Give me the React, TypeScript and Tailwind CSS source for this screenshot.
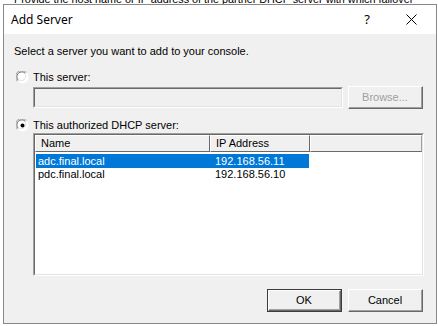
import React from "react";

const Radio = ({ checked }: { checked?: boolean }) => (
  <svg width="13" height="13" viewBox="0 0 13 13" className="shrink-0">
    <circle cx="6.5" cy="6.5" r="6" fill="#ffffff" />
    <path d="M1.3 10.3 A6 6 0 0 1 10.3 1.3" fill="none" stroke="#a0a0a0" strokeWidth="1" />
    <path d="M2.3 9.3 A4.8 4.8 0 0 1 9.3 2.3" fill="none" stroke="#696969" strokeWidth="1" />
    <path d="M10.7 2.7 A6 6 0 0 1 2.7 10.7" fill="none" stroke="#ffffff" strokeWidth="1" />
    <path d="M9.6 3.6 A4.8 4.8 0 0 1 3.6 9.6" fill="none" stroke="#e3e3e3" strokeWidth="1" />
    {checked && <circle cx="6.5" cy="6.5" r="2" fill="#000000" />}
  </svg>
);

const Btn = ({ label, w, def, disabled }: { label: string; w: string; def?: boolean; disabled?: boolean }) => (
  <div className={`${w} h-[23px] ${def ? "border border-[#3c3c3c]" : ""} bg-[#f0f0f0]`}>
    <div className="w-full h-full border-t border-l border-white border-b border-r border-b-[#696969] border-r-[#696969]">
      <div className="w-full h-full border-b border-r border-[#a0a0a0] border-t-0 border-l-0 flex items-center justify-center">
        <span className={`text-[11px] leading-none ${disabled ? "text-[#a0a0a0]" : "text-black"}`}>{label}</span>
      </div>
    </div>
  </div>
);

export default function App() {
  return (
    <div className="w-[438px] h-[326px] bg-white overflow-hidden" style={{ fontFamily: '"Liberation Sans", Arial, sans-serif' }}>
      <div className="h-[4px] overflow-hidden pl-[14px]">
        <div className="-mt-[7px] text-[10.8px] leading-[13px] text-black whitespace-nowrap">
          Provide the host name or IP address of the partner DHCP server with which failover
        </div>
      </div>
      <div className="ml-[3px] w-[434px] h-[320px] border border-[#888888] flex flex-col">
        <div className="h-[29px] bg-white flex items-center shrink-0">
          <span className="pl-[7px] text-[12px] text-black pt-[1px]" style={{ fontFamily: '"Noto Sans", sans-serif' }}>Add Server</span>
          <span className="ml-auto text-[13px] text-black mr-[36px]" style={{ fontFamily: '"Noto Sans", sans-serif' }}>?</span>
          <svg width="11" height="11" viewBox="0 0 11 11" className="mr-[19px]">
            <path d="M0.5 0.5 L10.5 10.5 M10.5 0.5 L0.5 10.5" stroke="#000" strokeWidth="1" />
          </svg>
        </div>
        <div className="flex-1 bg-[#f0f0f0] flex flex-col text-[11px] text-black">
          <div className="pl-[10px] pt-[11px] leading-[13px]">Select a server you want to add to your console.</div>
          <div className="flex items-center pl-[12px] mt-[13px] h-[13px]">
            <Radio />
            <span className="ml-[4px] leading-[13px]">This server:</span>
          </div>
          <div className="flex items-center pl-[29px] mt-[2px]">
            <div className="w-[310px] h-[21px] border-t border-l border-[#a0a0a0] border-b border-r border-b-white border-r-white">
              <div className="w-full h-full border-t border-l border-[#696969] border-b border-r border-b-[#e3e3e3] border-r-[#e3e3e3] bg-[#f0f0f0]" />
            </div>
            <div className="ml-[5px]">
              <Btn label="Browse..." w="w-[75px]" disabled />
            </div>
          </div>
          <div className="flex items-center pl-[12px] mt-[10px] h-[13px]">
            <Radio checked />
            <span className="ml-[4px] leading-[13px]">This authorized DHCP server:</span>
          </div>
          <div className="ml-[29px] mt-[1px] w-[391px] h-[143px] border-t border-l border-[#a0a0a0] border-b border-r border-b-white border-r-white">
            <div className="w-full h-full border-t border-l border-[#696969] border-b border-r border-b-[#e3e3e3] border-r-[#e3e3e3] bg-white flex flex-col">
              <div className="flex h-[17px] shrink-0">
                <div className="w-[175px] border-t border-l border-white border-b border-r border-b-[#696969] border-r-[#696969] bg-[#f0f0f0] flex items-center pl-[5px]">Name</div>
                <div className="w-[100px] border-t border-l border-white border-b border-r border-b-[#696969] border-r-[#696969] bg-[#f0f0f0] flex items-center pl-[5px]">IP Address</div>
                <div className="flex-1 border-t border-l border-white border-b border-r border-b-[#696969] border-r-[#a0a0a0] bg-[#f0f0f0]" />
              </div>
              <div className="flex h-[14px] mt-[2px] ml-[1px] w-[273px] bg-[#0078d7] text-white items-center leading-[14px]">
                <span className="w-[179px] pl-[2px]">adc.final.local</span>
                <span>192.168.56.11</span>
              </div>
              <div className="flex h-[13px] ml-[1px] w-[273px] items-center leading-[13px]">
                <span className="w-[179px] pl-[2px]">pdc.final.local</span>
                <span>192.168.56.10</span>
              </div>
            </div>
          </div>
          <div className="flex justify-end mt-[13px] mr-[13px] gap-[6px]">
            <Btn label="OK" w="w-[75px]" def />
            <Btn label="Cancel" w="w-[75px]" />
          </div>
        </div>
      </div>
    </div>
  );
}
